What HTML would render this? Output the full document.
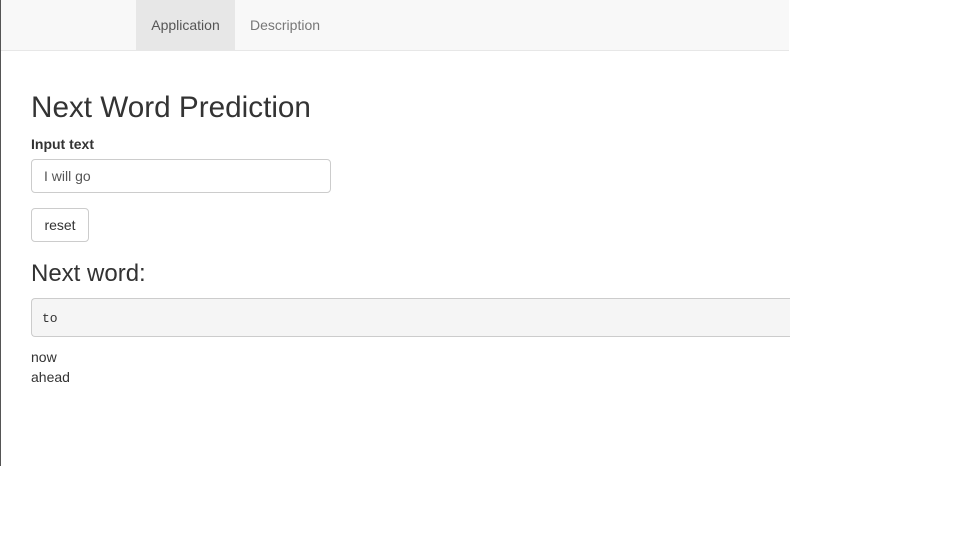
<!DOCTYPE html>
<html><head><style>
body{margin:0;width:960px;height:540px;background:#fff;font-family:"Liberation Sans",sans-serif;color:#333;position:relative;overflow:hidden}
.lb{position:absolute;left:0;top:0;width:1px;height:466px;background:#555}
.nav{position:absolute;left:1px;top:0;width:788px;height:50px;background:#f8f8f8;border-bottom:1px solid #e7e7e7}
.tab{position:absolute;top:0;height:50px;line-height:50px;font-size:14px;color:#777;text-align:center}
.t1{left:135px;width:99px;background:#e7e7e7;color:#555}
.t2{left:234px;width:100px}
.a{position:absolute;left:31px}
h1{position:absolute;left:31px;top:90px;margin:0;font-size:29.7px;font-weight:400;line-height:36px}
.lbl{top:136px;font-size:14px;font-weight:bold}
.inp{top:159px;width:298px;height:32px;border:1px solid #ccc;border-radius:4px;font-size:14px;line-height:32px;box-sizing:content-box}
.inp span{padding-left:12px;color:#555}
.btn{top:208px;width:56px;height:32px;border:1px solid #ccc;border-radius:4px;font-size:14px;line-height:32px;text-align:center}
h3{position:absolute;left:31px;top:260px;margin:0;font-size:24px;font-weight:400;line-height:28px}
.pre{top:298px;width:758px;height:37px;background:#f5f5f5;border:1px solid #ccc;border-right:none;border-radius:4px 0 0 4px;font-family:"Liberation Mono",monospace;font-size:13px;line-height:39px}
.pre span{padding-left:10px}
.out{top:347px;font-size:14px;line-height:20px}
</style></head><body>
<div class="lb"></div>
<div class="nav"><div class="tab t1">Application</div><div class="tab t2">Description</div></div>
<h1>Next Word Prediction</h1>
<div class="a lbl">Input text</div>
<div class="a inp"><span>I will go</span></div>
<div class="a btn">reset</div>
<h3>Next word:</h3>
<div class="a pre"><span>to</span></div>
<div class="a out">now<br>ahead</div>
</body></html>
